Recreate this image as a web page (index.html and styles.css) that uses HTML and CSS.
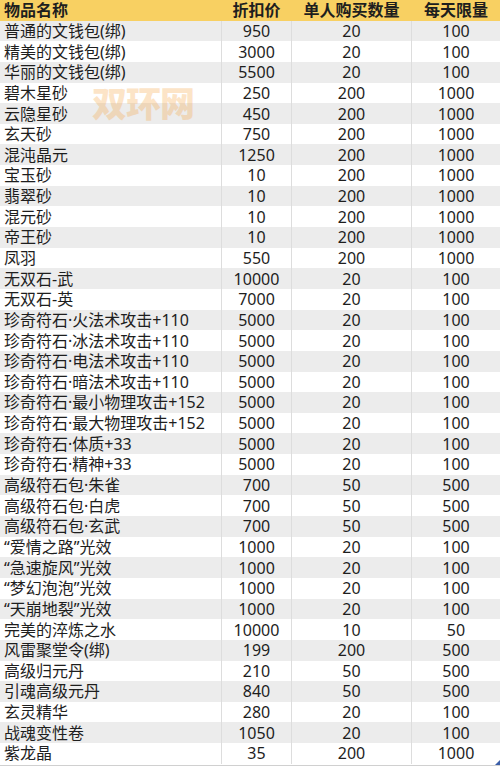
FILE: index.html
```html
<!DOCTYPE html>
<html lang="zh">
<head>
<meta charset="utf-8">
<link rel="stylesheet" href="styles.css">
</head>
<body>
<div class="sheet">
  <div class="row head"><div class="c name">物品名称</div><div class="c">折扣价</div><div class="c">单人购买数量</div><div class="c">每天限量</div></div>
  <div class="row"><div class="c name">普通的文钱包(绑)</div><div class="c">950</div><div class="c">20</div><div class="c">100</div></div>
  <div class="row"><div class="c name">精美的文钱包(绑)</div><div class="c">3000</div><div class="c">20</div><div class="c">100</div></div>
  <div class="row"><div class="c name">华丽的文钱包(绑)</div><div class="c">5500</div><div class="c">20</div><div class="c">100</div></div>
  <div class="row"><div class="c name">碧木星砂</div><div class="c">250</div><div class="c">200</div><div class="c">1000</div></div>
  <div class="row"><div class="c name">云隐星砂</div><div class="c">450</div><div class="c">200</div><div class="c">1000</div></div>
  <div class="row"><div class="c name">玄天砂</div><div class="c">750</div><div class="c">200</div><div class="c">1000</div></div>
  <div class="row"><div class="c name">混沌晶元</div><div class="c">1250</div><div class="c">200</div><div class="c">1000</div></div>
  <div class="row"><div class="c name">宝玉砂</div><div class="c">10</div><div class="c">200</div><div class="c">1000</div></div>
  <div class="row"><div class="c name">翡翠砂</div><div class="c">10</div><div class="c">200</div><div class="c">1000</div></div>
  <div class="row"><div class="c name">混元砂</div><div class="c">10</div><div class="c">200</div><div class="c">1000</div></div>
  <div class="row"><div class="c name">帝王砂</div><div class="c">10</div><div class="c">200</div><div class="c">1000</div></div>
  <div class="row"><div class="c name">凤羽</div><div class="c">550</div><div class="c">200</div><div class="c">1000</div></div>
  <div class="row"><div class="c name">无双石-武</div><div class="c">10000</div><div class="c">20</div><div class="c">100</div></div>
  <div class="row"><div class="c name">无双石-英</div><div class="c">7000</div><div class="c">20</div><div class="c">100</div></div>
  <div class="row"><div class="c name">珍奇符石·火法术攻击+110</div><div class="c">5000</div><div class="c">20</div><div class="c">100</div></div>
  <div class="row"><div class="c name">珍奇符石·冰法术攻击+110</div><div class="c">5000</div><div class="c">20</div><div class="c">100</div></div>
  <div class="row"><div class="c name">珍奇符石·电法术攻击+110</div><div class="c">5000</div><div class="c">20</div><div class="c">100</div></div>
  <div class="row"><div class="c name">珍奇符石·暗法术攻击+110</div><div class="c">5000</div><div class="c">20</div><div class="c">100</div></div>
  <div class="row"><div class="c name">珍奇符石·最小物理攻击+152</div><div class="c">5000</div><div class="c">20</div><div class="c">100</div></div>
  <div class="row"><div class="c name">珍奇符石·最大物理攻击+152</div><div class="c">5000</div><div class="c">20</div><div class="c">100</div></div>
  <div class="row"><div class="c name">珍奇符石·体质+33</div><div class="c">5000</div><div class="c">20</div><div class="c">100</div></div>
  <div class="row"><div class="c name">珍奇符石·精神+33</div><div class="c">5000</div><div class="c">20</div><div class="c">100</div></div>
  <div class="row"><div class="c name">高级符石包·朱雀</div><div class="c">700</div><div class="c">50</div><div class="c">500</div></div>
  <div class="row"><div class="c name">高级符石包·白虎</div><div class="c">700</div><div class="c">50</div><div class="c">500</div></div>
  <div class="row"><div class="c name">高级符石包·玄武</div><div class="c">700</div><div class="c">50</div><div class="c">500</div></div>
  <div class="row"><div class="c name">“爱情之路”光效</div><div class="c">1000</div><div class="c">20</div><div class="c">100</div></div>
  <div class="row"><div class="c name">“急速旋风”光效</div><div class="c">1000</div><div class="c">20</div><div class="c">100</div></div>
  <div class="row"><div class="c name">“梦幻泡泡”光效</div><div class="c">1000</div><div class="c">20</div><div class="c">100</div></div>
  <div class="row"><div class="c name">“天崩地裂”光效</div><div class="c">1000</div><div class="c">20</div><div class="c">100</div></div>
  <div class="row"><div class="c name">完美的淬炼之水</div><div class="c">10000</div><div class="c">10</div><div class="c">50</div></div>
  <div class="row"><div class="c name">风雷聚堂令(绑)</div><div class="c">199</div><div class="c">200</div><div class="c">500</div></div>
  <div class="row"><div class="c name">高级归元丹</div><div class="c">210</div><div class="c">50</div><div class="c">500</div></div>
  <div class="row"><div class="c name">引魂高级元丹</div><div class="c">840</div><div class="c">50</div><div class="c">500</div></div>
  <div class="row"><div class="c name">玄灵精华</div><div class="c">280</div><div class="c">20</div><div class="c">100</div></div>
  <div class="row"><div class="c name">战魂变性卷</div><div class="c">1050</div><div class="c">20</div><div class="c">100</div></div>
  <div class="row"><div class="c name">紫龙晶</div><div class="c">35</div><div class="c">200</div><div class="c">1000</div></div>
  <div class="mark">双环网</div>
  <div class="corner"></div>
</div>
</body>
</html>
```

FILE: styles.css
```css
html, body {
  margin: 0;
  padding: 0;
  background: #ffffff;
}
body {
  font-family: "Noto Sans", "Noto Sans CJK SC", sans-serif;
  color: #1e1e1e;
  font-size: 16px;
}
.sheet {
  position: relative;
  width: 500px;
  height: 766px;
  overflow: hidden;
  border-bottom: 1px solid #d0d0d0;
  box-sizing: border-box;
}
.row {
  display: grid;
  grid-template-columns: 222px 70px 120px 88px;
  height: 20.65px;
  background: #ffffff;
}
.row:nth-child(even) {
  background: #ececec;
}
.row.head {
  background: #f8d062;
  font-weight: bold;
}
.c {
  display: flex;
  align-items: center;
  justify-content: center;
  border-right: 1px solid #dddddd;
  line-height: 1;
  white-space: nowrap;
  overflow: hidden;
}
.c:last-child {
  border-right: none;
}
.head .c {
  border-right-color: transparent;
}
.c.name {
  justify-content: flex-start;
  padding-left: 4px;
}
.mark {
  position: absolute;
  left: 92px;
  top: 86px;
  font-size: 35px;
  font-weight: 900;
  color: #f5a13a;
  opacity: 0.28;
  letter-spacing: -1px;
  line-height: 1;
}
.corner {
  position: absolute;
  right: 0;
  bottom: 0;
  width: 0;
  height: 0;
  border-left: 5px solid transparent;
  border-bottom: 5px solid #3b5ea8;
}
```
